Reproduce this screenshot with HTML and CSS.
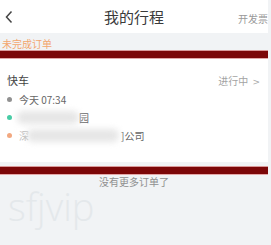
FILE: index.html
```html
<!DOCTYPE html>
<html lang="zh">
<head>
<meta charset="utf-8">
<link rel="stylesheet" href="styles.css">
</head>
<body>
<div class="page">
  <div class="header">
    <svg class="back" width="10" height="14" viewBox="0 0 10 14"><path d="M7.5 1.5 L2.5 7 L7.5 12.5" fill="none" stroke="#444" stroke-width="1.5"/></svg>
    <div class="title">我的行程</div>
    <div class="invoice">开发票</div>
  </div>
  <div class="label">未完成订单</div>
  <div class="bar"></div>
  <div class="card">
    <div class="card-head">
      <span class="kind">快车</span>
      <span class="status">进行中 <span class="chev">&gt;</span></span>
    </div>
    <div class="row"><span class="dot gray"></span><span class="txt">今天 07:34</span></div>
    <div class="row"><span class="dot green"></span><span class="blob b1"></span><span class="txt">园</span></div>
    <div class="row"><span class="dot orange"></span><span class="txt faint">深</span><span class="blob b2"></span><span class="txt">]公司</span></div>
  </div>
  <div class="gap"></div>
  <div class="bar"></div>
  <div class="nomore">没有更多订单了</div>
  <div class="watermark">sfjvip</div>
</div>
</body>
</html>
```
FILE: styles.css
```css
html, body { margin: 0; padding: 0; }
body { width: 271px; height: 245px; overflow: hidden; background: #f1f3f5; font-family: "Noto Sans CJK SC", "Noto Sans", sans-serif; }
.page { width: 268px; height: 245px; background: #f1f3f5; }
.header { height: 33px; background: #fff; display: flex; align-items: center; position: relative; }
.back { margin-left: 4px; margin-top: 1px; }
.title { position: absolute; left: 0; right: 0; text-align: center; font-size: 15px; color: #3a3a3a; top: 6px; line-height: 22px; pointer-events: none; }
.invoice { margin-left: auto; margin-right: 0; font-size: 10px; color: #999; margin-top: 3px; }
.label { height: 18px; font-size: 10px; line-height: 12px; color: #f3a66e; padding-left: 2px; padding-top: 5px; box-sizing: border-box; }
.bar { height: 7px; background: #7c0708; box-shadow: 0 -1px 0 #d99a9a, 0 1px 0 #e4a8a8; position: relative; }
.card { background: #fff; padding: 14px 8px 18px 6px; }
.card-head { display: flex; justify-content: space-between; align-items: center; height: 16px; margin-bottom: 2px; }
.kind { font-size: 11px; color: #444; margin-left: 1px; }
.status { font-size: 10px; color: #a3a3a3; }
.chev { font-family: "DejaVu Sans", sans-serif; font-size: 9px; margin-left: 2px; color: #aaa; }
.row { display: flex; align-items: center; height: 18px; font-size: 10px; color: #666; position: relative; }
.dot { width: 5px; height: 5px; border-radius: 50%; margin-right: 7px; margin-left: 1px; flex: none; }
.gray { background: #919191; }
.green { background: #47ccA5; }
.orange { background: #f2a880; }
.txt { white-space: nowrap; }
.faint { color: #bbb; }
.blob { display: block; height: 13px; background: #e6e6e6; filter: blur(3px); border-radius: 6px; }
.b1 { width: 62px; margin-left: -2px; margin-right: 0; }
.b2 { width: 92px; margin-left: -2px; margin-right: 2px; }
.gap { height: 5px; }
.nomore { text-align: center; font-size: 10px; color: #8f8f8f; margin-top: 1px; line-height: 14px; }
.watermark { font-family: "Open Sans", sans-serif; font-weight: 300; font-size: 38px; color: #e4e8eb; margin-left: 8px; line-height: 40px; margin-top: -3px; }
```
